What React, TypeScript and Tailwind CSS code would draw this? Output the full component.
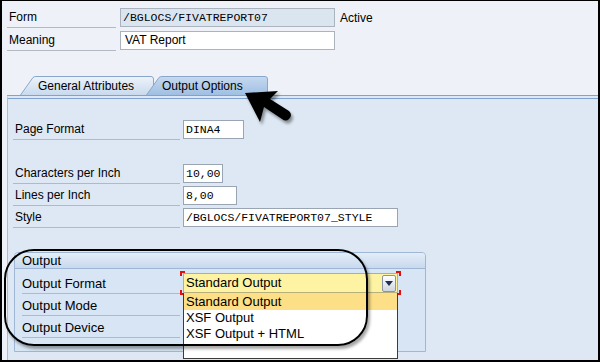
import React from "react";

const sans = "font-['Liberation_Sans',Arial,sans-serif]";
const mono = "font-['Liberation_Mono','Courier_New',monospace]";

function Field({
  label,
  labelW,
  inputW,
  value,
  className = "",
}: {
  label: string;
  labelW: string;
  inputW: string;
  value: string;
  className?: string;
}) {
  return (
    <div className={`flex h-[22px] items-start ${className}`}>
      <div className={`${labelW} h-[22px] border-b border-[#b3b9c2] pl-[2px] pt-[1px] text-[12px] leading-[21px] text-black`}>
        {label}
      </div>
      <div
        className={`${inputW} ml-[3px] mt-[2px] h-[19px] border border-[#9aa5b4] bg-white pl-[2px] ${mono} text-[11.5px] leading-[17px] text-black`}
      >
        {value}
      </div>
    </div>
  );
}

function Tab({ label, active, w }: { label: string; active?: boolean; w: number }) {
  const fill = active ? "url(#tabOn)" : "url(#tabOff)";
  return (
    <div className="relative h-[19px] shrink-0" style={{ width: w }}>
      <svg className="absolute inset-0" width={w} height={19} viewBox={`0 0 ${w} 19`}>
        <defs>
          <linearGradient id="tabOn" x1="0" y1="0" x2="0" y2="1">
            <stop offset="0" stopColor="#c6d9ef" />
            <stop offset="1" stopColor="#9fbfe3" />
          </linearGradient>
          <linearGradient id="tabOff" x1="0" y1="0" x2="0" y2="1">
            <stop offset="0" stopColor="#edf3fa" />
            <stop offset="1" stopColor="#c9daee" />
          </linearGradient>
        </defs>
        <path
          d={`M0.5 19 L13 1.5 Q14 0.5 16 0.5 L${w - 3} 0.5 Q${w - 0.5} 0.5 ${w - 0.5} 3 L${w - 0.5} 19`}
          fill={fill}
          stroke="#8aa7cb"
          strokeWidth="1"
        />
      </svg>
      <div
        className={`relative flex h-full items-center pt-[1px] text-[12px] text-black ${active ? "pl-[16px]" : "pl-[18px]"}`}
      >
        {label}
      </div>
    </div>
  );
}

export default function App() {
  return (
    <div
      className={`relative flex h-[362px] w-[600px] flex-col overflow-hidden border-b-2 border-l-2 border-r-2 border-t border-black bg-[#eef2f8] ${sans}`}
    >
      {/* header fields */}
      <div className="pl-[5px] pt-[5px]">
        <div className="flex h-[23px] items-start">
          <div className="h-[22px] w-[109px] border-b border-[#b3b9c2] pl-[2px] pt-[1px] text-[12px] leading-[21px]">Form</div>
          <div
            className={`ml-[4px] mt-[2px] h-[19px] w-[215px] border border-[#aab3be] bg-[#dbe5ef] pl-[2px] ${mono} text-[11.5px] leading-[17px]`}
          >
            /BGLOCS/FIVATREPORT07
          </div>
          <div className="ml-[5px] pt-[1px] text-[12px] leading-[23px]">Active</div>
        </div>
        <div className="flex h-[23px] items-start">
          <div className="h-[22px] w-[109px] border-b border-[#b3b9c2] pl-[2px] pt-[1px] text-[12px] leading-[21px]">Meaning</div>
          <div className="ml-[4px] mt-[2px] h-[19px] w-[215px] border border-[#aab3be] bg-white pl-[4px] text-[12px] leading-[17px]">
            VAT Report
          </div>
        </div>
      </div>

      {/* tabs */}
      <div className="ml-[18px] mt-[24px] flex h-[19px]">
        <Tab label="General Attributes" w={134} />
        <div className="-ml-[8px]">
          <Tab label="Output Options" active w={122} />
        </div>
      </div>

      {/* panel */}
      <div className="ml-[5px] flex-1 border-l border-t-[4px] border-double border-l-[#a9bdd6] border-t-[#7fa3cf] bg-[#dde8f4] pl-[5px]">
        <Field className="mt-[19px]" label="Page Format" labelW="w-[167px]" inputW="w-[61px]" value="DINA4" />
        <Field className="mt-[22px]" label="Characters per Inch" labelW="w-[167px]" inputW="w-[40px]" value="10,00" />
        <Field label="Lines per Inch" labelW="w-[167px]" inputW="w-[54px]" value="8,00" />
        <Field label="Style" labelW="w-[167px]" inputW="w-[215px]" value="/BGLOCS/FIVATREPORT07_STYLE" />

        {/* output group */}
        <div className="ml-[1px] mt-[24px] h-[100px] w-[412px] rounded-t-[4px] border border-[#9fb7d5] bg-[#d7e5f4]">
          <div className="h-[16px] rounded-t-[3px] border-b border-[#9fb7d5] bg-gradient-to-b from-[#e4edf8] to-[#c8d9ee] pl-[7px] text-[13px] leading-[15px]">
            Output
          </div>
          <div className="pl-[7px] pt-[3px] text-[13px]">
            <div className="flex h-[22px] items-start">
              <div className="h-[22px] w-[158px] border-b border-[#b3b9c2] pt-[1px] leading-[22px]">Output Format</div>
              <div className="relative ml-[3px] mt-[1px]">
                <div className="flex h-[20px] w-[215px] items-center border border-[#b8b07a] bg-[#fdf3a3] pl-[2px]">
                  <span className="flex-1 leading-[18px]">Standard Output</span>
                  <div className="mr-[1px] flex h-[17px] w-[14px] items-center justify-center rounded-[2px] border border-[#8c949e] bg-gradient-to-b from-white to-[#cfd6df]">
                    <svg width="8" height="5" viewBox="0 0 8 5">
                      <path d="M0 0 L8 0 L4 5 Z" fill="#1e2f52" />
                    </svg>
                  </div>
                </div>
                {/* red focus brackets */}
                <div className="absolute -left-[3px] -top-[2px] h-[5px] w-[5px] border-l-2 border-t-2 border-[#e01010]" />
                <div className="absolute -bottom-[2px] -left-[3px] h-[5px] w-[5px] border-b-2 border-l-2 border-[#e01010]" />
                <div className="absolute -right-[3px] -top-[2px] h-[5px] w-[5px] border-r-2 border-t-2 border-[#e01010]" />
                <div className="absolute -bottom-[2px] -right-[3px] h-[5px] w-[5px] border-b-2 border-r-2 border-[#e01010]" />
                {/* open list */}
                <div className="absolute left-0 top-[20px] z-10 h-[66px] w-[215px] border border-t-0 border-[#3c3c3c] bg-white">
                  <div className="h-[17px] bg-[#fddf87] pl-[2px] leading-[17px]">Standard Output</div>
                  <div className="h-[16px] pl-[2px] leading-[16px]">XSF Output</div>
                  <div className="h-[16px] pl-[2px] leading-[16px]">XSF Output + HTML</div>
                </div>
              </div>
            </div>
            <div className="flex h-[22px]">
              <div className="h-[22px] w-[158px] border-b border-[#b3b9c2] pt-[1px] leading-[22px]">Output Mode</div>
            </div>
            <div className="flex h-[22px]">
              <div className="h-[22px] w-[158px] border-b border-[#b3b9c2] pt-[1px] leading-[22px]">Output Device</div>
            </div>
          </div>
        </div>
      </div>

      {/* annotation: rounded outline */}
      <div className="absolute left-[2px] top-[248px] z-20 h-[97px] w-[364px] rounded-[30px] border-2 border-black shadow-[2px_3px_3px_rgba(0,0,0,0.35)]" />

      {/* annotation: arrow */}
      <svg className="absolute left-[236px] top-[82px] z-20" width="60" height="48" viewBox="236 82 60 48">
        <defs>
          <filter id="sh" x="-20%" y="-20%" width="150%" height="150%">
            <feDropShadow dx="2" dy="3" stdDeviation="1.5" floodColor="#000" floodOpacity="0.4" />
          </filter>
        </defs>
        <path
          d="M243 92 L276 90 L268 98 L287 110 Q291 114 287 118 Q284 121 280 118 L262 106 L258 121 Z"
          fill="#000"
          filter="url(#sh)"
        />
      </svg>
    </div>
  );
}
